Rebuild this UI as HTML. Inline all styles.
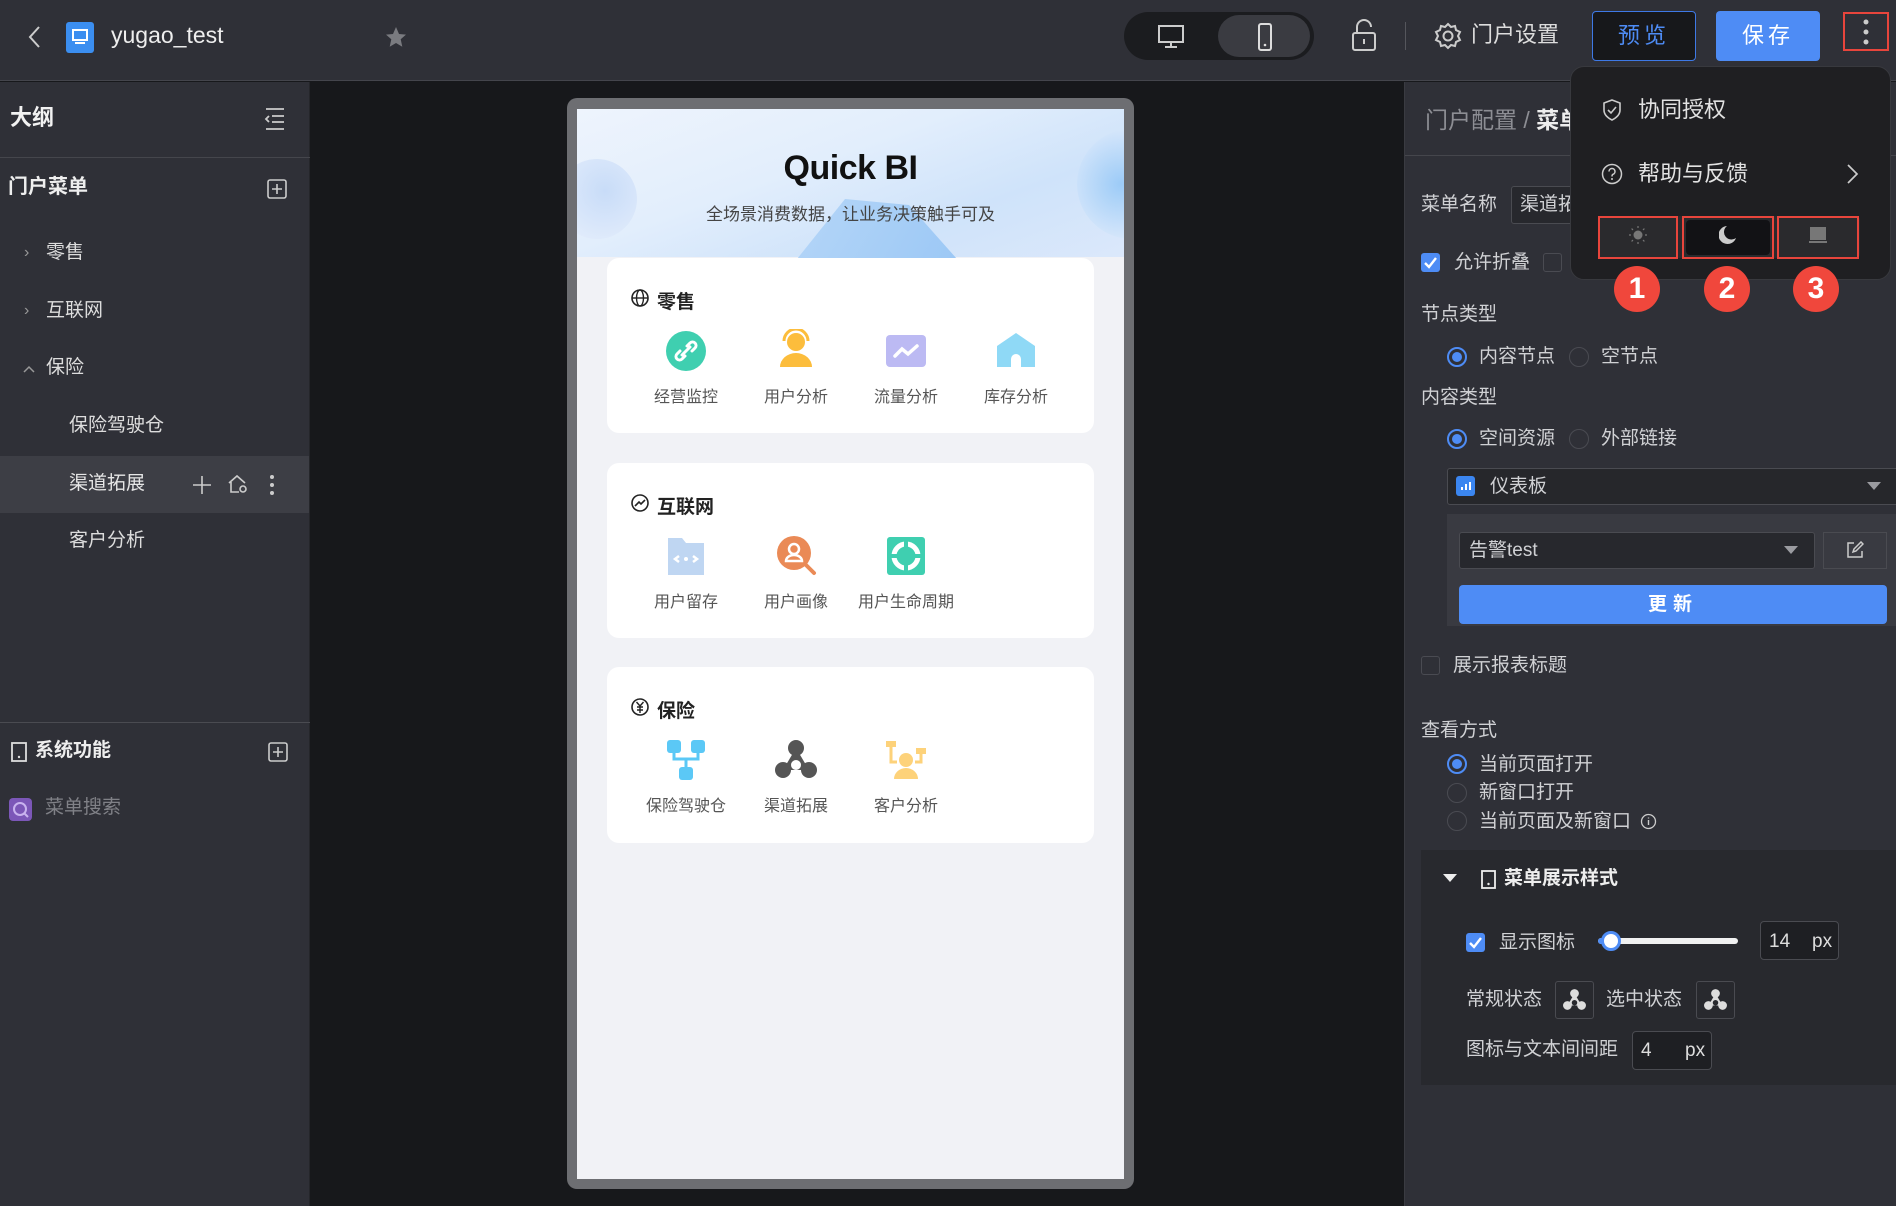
<!DOCTYPE html>
<html><head><meta charset="utf-8">
<style>
*{margin:0;padding:0;box-sizing:border-box}
body{width:1896px;height:1206px;background:#17181b;font-family:"Liberation Sans","Noto Sans CJK SC",sans-serif;color:#d8d9dc;position:relative;overflow:hidden}
.a{position:absolute}
.t{position:absolute;white-space:nowrap;line-height:1}
.rad{position:absolute;width:20px;height:20px;border-radius:50%;border:1.5px solid #4a4b52}
.rad.on{border:2px solid #4e8cf5}
.rad.on:after{content:"";position:absolute;left:3px;top:3px;width:10px;height:10px;border-radius:50%;background:#4e8cf5}
.cb{position:absolute;width:19px;height:19px;border-radius:3px;border:1.5px solid #4a4b52}
.cb.on{background:#4e8cf5;border:none}
.lbl{font-size:19px;color:#d0d1d4}
.card{position:absolute;left:30px;width:487px;background:#fff;border-radius:12px}
.ct{position:absolute;left:50px;font-size:19px;font-weight:bold;color:#222}
.ci{position:absolute;width:44px;height:44px}
.cl{position:absolute;width:120px;text-align:center;font-size:16px;color:#555}
</style></head><body>
<!-- top bar -->
<div class="a" style="left:0;top:0;width:1896px;height:81px;background:#2f3037;border-bottom:1px solid #44454c"></div>
<svg class="a" style="left:26px;top:24px" width="18" height="26" viewBox="0 0 18 26"><path d="M13 3 L4 13 L13 23" fill="none" stroke="#ccc" stroke-width="2"/></svg>
<div class="a" style="left:66px;top:22px;width:28px;height:31px;background:#3b8ef0;border-radius:3px"></div>
<svg class="a" style="left:69px;top:27px" width="22" height="20" viewBox="0 0 22 20"><rect x="4" y="3" width="14" height="10" fill="none" stroke="#fff" stroke-width="2"/><rect x="6" y="15" width="10" height="2" fill="#fff"/></svg>
<div class="t" style="left:111px;top:24px;font-size:23px;color:#eee">yugao_test</div>
<svg class="a" style="left:384px;top:25px" width="24" height="24" viewBox="0 0 24 24"><path d="M12 2l3 7 7 .6-5.3 4.7 1.6 7.4L12 18l-6.3 3.7 1.6-7.4L2 9.6 9 9z" fill="#7a7b80"/></svg>
<div class="a" style="left:1124px;top:12px;width:190px;height:48px;border-radius:24px;background:#1b1c1f"></div>
<div class="a" style="left:1218px;top:15px;width:92px;height:42px;border-radius:21px;background:#3a3b41"></div>
<svg class="a" style="left:1157px;top:24px" width="28" height="26" viewBox="0 0 28 26"><rect x="2" y="2" width="24" height="16" fill="none" stroke="#ccc" stroke-width="2"/><path d="M14 18v5M8 23h12" stroke="#ccc" stroke-width="2"/></svg>
<svg class="a" style="left:1257px;top:22px" width="16" height="30" viewBox="0 0 16 30"><rect x="2" y="2" width="12" height="26" rx="2" fill="none" stroke="#ddd" stroke-width="2"/><circle cx="8" cy="23" r="1.3" fill="#ddd"/></svg>
<svg class="a" style="left:1350px;top:19px" width="28" height="34" viewBox="0 0 28 34"><path d="M7 14V8a7 7 0 0 1 14 0" fill="none" stroke="#ccc" stroke-width="2"/><rect x="3" y="14" width="22" height="17" rx="2" fill="none" stroke="#ccc" stroke-width="2"/><path d="M14 20v5" stroke="#ccc" stroke-width="2"/></svg>
<div class="a" style="left:1405px;top:22px;width:1px;height:28px;background:#55565c"></div>
<svg class="a" style="left:1434px;top:22px" width="28" height="28" viewBox="0 0 28 28"><circle cx="14" cy="14" r="4.5" fill="none" stroke="#ccc" stroke-width="2"/><path d="M14 2l3 3 4-1 1 4 4 2-2 4 2 4-4 2-1 4-4-1-3 3-3-3-4 1-1-4-4-2 2-4-2-4 4-2 1-4 4 1z" fill="none" stroke="#ccc" stroke-width="2"/></svg>
<div class="t" style="left:1471px;top:24px;font-size:22px;color:#ddd">门户设置</div>
<div class="a" style="left:1592px;top:11px;width:104px;height:50px;border:1.5px solid #3e79e6;border-radius:4px;background:#17181b;color:#4e8cf5;font-size:22px;text-align:center;line-height:47px;letter-spacing:4px">预览</div>
<div class="a" style="left:1716px;top:11px;width:104px;height:50px;border-radius:4px;background:#4e8cf5;color:#fff;font-size:22px;text-align:center;line-height:50px;letter-spacing:4px">保存</div>
<div class="a" style="left:1843px;top:12px;width:46px;height:39px;border:2.5px solid #e8453c"></div>
<svg class="a" style="left:1862px;top:18px" width="8" height="28" viewBox="0 0 8 28"><circle cx="4" cy="4" r="2.5" fill="#ccc"/><circle cx="4" cy="14" r="2.5" fill="#ccc"/><circle cx="4" cy="24" r="2.5" fill="#ccc"/></svg>

<!-- left sidebar -->
<div class="a" style="left:0;top:82px;width:310px;height:1124px;background:#2f3037;border-right:1px solid #25262a"></div>
<div class="t" style="left:10px;top:107px;font-size:22px;font-weight:bold;color:#f2f2f2">大纲</div>
<svg class="a" style="left:264px;top:107px" width="22" height="24" viewBox="0 0 22 24"><path d="M2 2h18M8 9h12M8 15h12M2 22h18M5 9l-3 3 3 3" fill="none" stroke="#ccc" stroke-width="1.8"/></svg>
<div class="a" style="left:0;top:157px;width:310px;height:1px;background:#45464c"></div>
<div class="t" style="left:8px;top:177px;font-size:20px;font-weight:bold;color:#eee">门户菜单</div>
<svg class="a" style="left:267px;top:179px" width="20" height="20" viewBox="0 0 20 20"><rect x="1" y="1" width="18" height="18" rx="2" fill="none" stroke="#ccc" stroke-width="1.6"/><path d="M10 5v10M5 10h10" stroke="#ccc" stroke-width="1.6"/></svg>
<div class="t" style="left:24px;top:245px;font-size:16px;color:#999">›</div>
<div class="t" style="left:46px;top:243px;font-size:19px;color:#ddd">零售</div>
<div class="t" style="left:24px;top:303px;font-size:16px;color:#999">›</div>
<div class="t" style="left:46px;top:301px;font-size:19px;color:#ddd">互联网</div>
<svg class="a" style="left:22px;top:364px" width="14" height="10" viewBox="0 0 14 10"><path d="M2 8l5-5 5 5" fill="none" stroke="#999" stroke-width="1.5"/></svg>
<div class="t" style="left:46px;top:358px;font-size:19px;color:#ddd">保险</div>
<div class="t" style="left:69px;top:416px;font-size:19px;color:#ddd">保险驾驶仓</div>
<div class="a" style="left:0;top:456px;width:309px;height:57px;background:#3d3e45"></div>
<div class="t" style="left:69px;top:474px;font-size:19px;color:#e6e6e6">渠道拓展</div>
<svg class="a" style="left:192px;top:475px" width="20" height="20" viewBox="0 0 20 20"><path d="M10 1v18M1 10h18" stroke="#ccc" stroke-width="1.6"/></svg>
<svg class="a" style="left:227px;top:474px" width="22" height="20" viewBox="0 0 22 20"><path d="M2 9L10 2l8 7M4 8v10h8" fill="none" stroke="#ccc" stroke-width="1.6"/><circle cx="16" cy="15" r="3" fill="none" stroke="#ccc" stroke-width="1.6"/></svg>
<svg class="a" style="left:268px;top:474px" width="8" height="22" viewBox="0 0 8 22"><circle cx="4" cy="3" r="2" fill="#ccc"/><circle cx="4" cy="11" r="2" fill="#ccc"/><circle cx="4" cy="19" r="2" fill="#ccc"/></svg>
<div class="t" style="left:69px;top:531px;font-size:19px;color:#ddd">客户分析</div>
<div class="a" style="left:0;top:722px;width:310px;height:1px;background:#4a4b51"></div>
<svg class="a" style="left:11px;top:742px" width="16" height="20" viewBox="0 0 16 20"><rect x="1" y="1" width="14" height="18" fill="none" stroke="#ddd" stroke-width="1.8"/><circle cx="8" cy="15" r="1.2" fill="#ddd"/></svg>
<div class="t" style="left:35px;top:741px;font-size:19px;font-weight:bold;color:#eee">系统功能</div>
<svg class="a" style="left:268px;top:742px" width="20" height="20" viewBox="0 0 20 20"><rect x="1" y="1" width="18" height="18" rx="2" fill="none" stroke="#ccc" stroke-width="1.6"/><path d="M10 5v10M5 10h10" stroke="#ccc" stroke-width="1.6"/></svg>
<div class="a" style="left:9px;top:798px;width:23px;height:23px;border-radius:4px;background:#7c57b8"></div>
<svg class="a" style="left:11px;top:800px" width="20" height="20" viewBox="0 0 20 20"><circle cx="9" cy="9" r="6" fill="none" stroke="#c9b3ef" stroke-width="2"/><path d="M13 13l4 4" stroke="#c9b3ef" stroke-width="2"/></svg>
<div class="t" style="left:45px;top:798px;font-size:19px;color:#808187">菜单搜索</div>

<!-- phone -->
<div class="a" style="left:567px;top:98px;width:567px;height:1091px;background:#6d6e72;border-radius:10px"></div>
<div class="a" style="left:577px;top:109px;width:547px;height:1070px;background:#f1f2f6;overflow:hidden">
  <div class="a" style="left:0;top:0;width:547px;height:148px;background:linear-gradient(160deg,#eef4fd 0%,#e2eefc 40%,#cfe3fa 70%,#dbe8fb 100%)"></div>
  <div class="a" style="left:-20px;top:50px;width:80px;height:80px;border-radius:50%;background:radial-gradient(circle at 60% 40%,#c8dcf8,#e8f0fc)"></div>
  <div class="a" style="left:500px;top:20px;width:110px;height:110px;border-radius:50%;background:radial-gradient(circle at 40% 50%,#9ccbf7,#dbe9fb 70%,transparent)"></div>
  <div class="a" style="left:220px;top:90px;width:160px;height:60px;background:linear-gradient(120deg,#b5d6f8,#9cc8f5);clip-path:polygon(30% 0,70% 10%,100% 100%,0 100%)"></div>
  <div class="t" style="left:0;width:547px;text-align:center;top:42px;font-size:34px;font-weight:bold;color:#111;letter-spacing:-0.5px">Quick BI</div>
  <div class="t" style="left:0;width:547px;text-align:center;top:97px;font-size:17px;color:#444">全场景消费数据，让业务决策触手可及</div>

  <div class="card" style="top:149px;height:175px">
    <svg class="a" style="left:23px;top:30px" width="20" height="20" viewBox="0 0 20 20"><circle cx="10" cy="10" r="8" fill="none" stroke="#222" stroke-width="1.6"/><ellipse cx="10" cy="10" rx="3.5" ry="8" fill="none" stroke="#222" stroke-width="1.4"/><path d="M2 10h16" stroke="#222" stroke-width="1.4"/></svg>
    <div class="ct" style="top:29px">零售</div>
    <svg class="ci" style="left:57px;top:71px" viewBox="0 0 44 44"><circle cx="22" cy="22" r="20" fill="#3fcfb0"/><path d="M18 26l8-8M16 22l-3 3a3.5 3.5 0 0 0 5 5l3-3M28 22l3-3a3.5 3.5 0 0 0-5-5l-3 3" fill="none" stroke="#fff" stroke-width="3" stroke-linecap="round"/></svg>
    <svg class="ci" style="left:167px;top:71px" viewBox="0 0 44 44"><circle cx="22" cy="13" r="9" fill="#fcbd3c"/><path d="M6 38a16 14 0 0 1 32 0z" fill="#fcbd3c"/><path d="M10 12a12 12 0 0 1 24 0" fill="none" stroke="#fcbd3c" stroke-width="3"/></svg>
    <svg class="ci" style="left:277px;top:71px" viewBox="0 0 44 44"><rect x="2" y="6" width="40" height="32" rx="4" fill="#bcbaf3"/><path d="M11 27l7-7 6 5 9-8" fill="none" stroke="#fff" stroke-width="3.5" stroke-linecap="round"/></svg>
    <svg class="ci" style="left:387px;top:71px" viewBox="0 0 44 44"><path d="M3 17L22 4l19 13v21H27v-8a5 5 0 0 0-10 0v8H3z" fill="#8fd9f6"/></svg>
    <div class="cl" style="left:19px;top:125px">经营监控</div>
    <div class="cl" style="left:129px;top:125px">用户分析</div>
    <div class="cl" style="left:239px;top:125px">流量分析</div>
    <div class="cl" style="left:349px;top:125px">库存分析</div>
  </div>

  <div class="card" style="top:354px;height:175px">
    <svg class="a" style="left:23px;top:30px" width="20" height="20" viewBox="0 0 20 20"><circle cx="10" cy="10" r="8" fill="none" stroke="#222" stroke-width="1.6"/><path d="M5 13l4-4 2 2 4-4" fill="none" stroke="#222" stroke-width="1.6"/></svg>
    <div class="ct" style="top:29px">互联网</div>
    <svg class="ci" style="left:57px;top:71px" viewBox="0 0 44 44"><path d="M4 4h14l4 5h18v32H4z" fill="#bfd6f2"/><path d="M15 22l-4 3 4 3M29 22l4 3-4 3" fill="none" stroke="#fff" stroke-width="2.5"/><circle cx="22" cy="25" r="2" fill="#fff"/></svg>
    <svg class="ci" style="left:167px;top:71px" viewBox="0 0 44 44"><circle cx="20" cy="19" r="17" fill="#ea8a56"/><circle cx="20" cy="15" r="5" fill="none" stroke="#fff" stroke-width="2.5"/><path d="M12 27a8 6 0 0 1 16 0z" fill="none" stroke="#fff" stroke-width="2.5"/><path d="M32 31l8 8" stroke="#ea8a56" stroke-width="4" stroke-linecap="round"/></svg>
    <svg class="ci" style="left:277px;top:71px" viewBox="0 0 44 44"><rect x="3" y="3" width="38" height="38" rx="3" fill="#3fcfb0"/><circle cx="22" cy="22" r="12" fill="none" stroke="#fff" stroke-width="5"/><path d="M22 6v8M22 30v8M6 22h8M30 22h8" stroke="#3fcfb0" stroke-width="4"/></svg>
    <div class="cl" style="left:19px;top:125px">用户留存</div>
    <div class="cl" style="left:129px;top:125px">用户画像</div>
    <div class="cl" style="left:229px;top:125px;width:140px">用户生命周期</div>
  </div>

  <div class="card" style="top:558px;height:176px">
    <svg class="a" style="left:23px;top:30px" width="20" height="20" viewBox="0 0 20 20"><circle cx="10" cy="10" r="8" fill="none" stroke="#222" stroke-width="1.6"/><path d="M6.5 5l3.5 4 3.5-4M10 9v7M7 10h6M7 13h6" fill="none" stroke="#222" stroke-width="1.4"/></svg>
    <div class="ct" style="top:29px">保险</div>
    <svg class="ci" style="left:57px;top:71px" viewBox="0 0 44 44"><rect x="3" y="2" width="14" height="13" rx="3" fill="#5bc8f6"/><rect x="27" y="2" width="14" height="13" rx="3" fill="#5bc8f6"/><rect x="15" y="29" width="14" height="13" rx="3" fill="#5bc8f6"/><path d="M10 15v6h24v-6M22 21v8" fill="none" stroke="#5bc8f6" stroke-width="3"/></svg>
    <svg class="ci" style="left:167px;top:71px" viewBox="0 0 44 44"><circle cx="22" cy="10" r="8" fill="#555"/><circle cx="9" cy="32" r="8" fill="#555"/><circle cx="35" cy="32" r="8" fill="#555"/><path d="M22 10L9 32h26z" fill="#555"/><circle cx="22" cy="27" r="5" fill="#fff"/></svg>
    <svg class="ci" style="left:277px;top:71px" viewBox="0 0 44 44"><rect x="2" y="3" width="10" height="6" fill="#fdd27a"/><rect x="32" y="10" width="10" height="6" fill="#fdd27a"/><path d="M7 9v15h6M37 16v8h-6" fill="none" stroke="#fdd27a" stroke-width="3"/><circle cx="22" cy="22" r="7" fill="#fdd27a"/><path d="M10 41a12 11 0 0 1 24 0z" fill="#fdd27a"/></svg>
    <div class="cl" style="left:9px;top:125px;width:140px">保险驾驶仓</div>
    <div class="cl" style="left:129px;top:125px">渠道拓展</div>
    <div class="cl" style="left:239px;top:125px">客户分析</div>
  </div>
</div>

<!-- right panel -->
<div class="a" style="left:1404px;top:82px;width:492px;height:1124px;background:#2f3037;border-left:1px solid #3a3b41"></div>
<div class="t" style="left:1425px;top:109px;font-size:23px;color:#8d8e94">门户配置 / <span style="color:#eee;font-weight:bold">菜单</span></div>
<div class="a" style="left:1405px;top:155px;width:491px;height:1px;background:#45464c"></div>
<div class="t lbl" style="left:1421px;top:195px">菜单名称</div>
<div class="a" style="left:1511px;top:186px;width:100px;height:38px;border:1px solid #4a4b51;border-radius:3px;background:#27282d"></div>
<div class="t lbl" style="left:1520px;top:195px">渠道拓</div>
<div class="cb on" style="left:1421px;top:253px"></div>
<svg class="a" style="left:1423px;top:256px" width="15" height="13" viewBox="0 0 15 13"><path d="M2 7l4 4 7-9" fill="none" stroke="#fff" stroke-width="2.4"/></svg>
<div class="t lbl" style="left:1454px;top:253px">允许折叠</div>
<div class="cb" style="left:1543px;top:253px"></div>
<div class="t lbl" style="left:1421px;top:305px">节点类型</div>
<div class="rad on" style="left:1447px;top:347px"></div>
<div class="t lbl" style="left:1479px;top:347px">内容节点</div>
<div class="rad" style="left:1569px;top:347px"></div>
<div class="t lbl" style="left:1601px;top:347px">空节点</div>
<div class="t lbl" style="left:1421px;top:388px">内容类型</div>
<div class="rad on" style="left:1447px;top:429px"></div>
<div class="t lbl" style="left:1479px;top:429px">空间资源</div>
<div class="rad" style="left:1569px;top:429px"></div>
<div class="t lbl" style="left:1601px;top:429px">外部链接</div>
<div class="a" style="left:1447px;top:468px;width:460px;height:37px;border:1px solid #4a4b51;border-radius:3px;background:#26272b"></div>
<div class="a" style="left:1456px;top:476px;width:19px;height:20px;border-radius:3px;background:#3b86f0"></div>
<svg class="a" style="left:1459px;top:479px" width="14" height="14" viewBox="0 0 14 14"><path d="M3 11V8M7 11V5M11 11V3" stroke="#fff" stroke-width="2"/></svg>
<div class="t lbl" style="left:1490px;top:477px">仪表板</div>
<svg class="a" style="left:1867px;top:482px" width="14" height="9" viewBox="0 0 14 9"><path d="M0 0h14L7 8z" fill="#9a9ba0"/></svg>
<div class="a" style="left:1447px;top:514px;width:449px;height:112px;background:#393a41"></div>
<div class="a" style="left:1459px;top:532px;width:356px;height:37px;border:1px solid #4a4b51;border-radius:3px;background:#27282d"></div>
<div class="t lbl" style="left:1469px;top:541px">告警test</div>
<svg class="a" style="left:1784px;top:546px" width="14" height="9" viewBox="0 0 14 9"><path d="M0 0h14L7 8z" fill="#9a9ba0"/></svg>
<div class="a" style="left:1823px;top:532px;width:64px;height:37px;border:1px solid #4a4b51;background:#393a41"></div>
<svg class="a" style="left:1846px;top:541px" width="18" height="18" viewBox="0 0 18 18"><path d="M8 2H2v14h14v-6" fill="none" stroke="#ccc" stroke-width="1.5"/><path d="M7 11l1-3 7-7 2 2-7 7z" fill="none" stroke="#ccc" stroke-width="1.5"/></svg>
<div class="a" style="left:1459px;top:585px;width:428px;height:39px;border-radius:4px;background:#4e8cf5;color:#fff;font-size:19px;text-align:center;line-height:39px;letter-spacing:6px;font-weight:bold">更新</div>
<div class="cb" style="left:1421px;top:656px"></div>
<div class="t lbl" style="left:1453px;top:656px">展示报表标题</div>
<div class="t lbl" style="left:1421px;top:721px">查看方式</div>
<div class="rad on" style="left:1447px;top:754px"></div>
<div class="t lbl" style="left:1479px;top:755px">当前页面打开</div>
<div class="rad" style="left:1447px;top:783px"></div>
<div class="t lbl" style="left:1479px;top:783px">新窗口打开</div>
<div class="rad" style="left:1447px;top:811px"></div>
<div class="t lbl" style="left:1479px;top:812px">当前页面及新窗口</div>
<svg class="a" style="left:1640px;top:813px" width="17" height="17" viewBox="0 0 17 17"><circle cx="8.5" cy="8.5" r="7" fill="none" stroke="#ccc" stroke-width="1.3"/><path d="M8.5 7v5M8.5 4.5v1" stroke="#ccc" stroke-width="1.4"/></svg>
<div class="a" style="left:1421px;top:850px;width:475px;height:235px;background:#28292e"></div>
<svg class="a" style="left:1443px;top:874px" width="14" height="9" viewBox="0 0 14 9"><path d="M0 0h14L7 8z" fill="#eee"/></svg>
<svg class="a" style="left:1481px;top:870px" width="15" height="19" viewBox="0 0 15 19"><rect x="1" y="1" width="13" height="17" fill="none" stroke="#eee" stroke-width="1.8"/><circle cx="7.5" cy="14" r="1.2" fill="#eee"/></svg>
<div class="t" style="left:1504px;top:869px;font-size:19px;font-weight:bold;color:#eee">菜单展示样式</div>
<div class="cb on" style="left:1466px;top:933px"></div>
<svg class="a" style="left:1468px;top:936px" width="15" height="13" viewBox="0 0 15 13"><path d="M2 7l4 4 7-9" fill="none" stroke="#fff" stroke-width="2.4"/></svg>
<div class="t lbl" style="left:1499px;top:933px">显示图标</div>
<div class="a" style="left:1598px;top:938px;width:140px;height:6px;border-radius:3px;background:#f1f1f1"></div>
<div class="a" style="left:1598px;top:938px;width:18px;height:6px;border-radius:3px;background:#4e8cf5"></div>
<div class="a" style="left:1601px;top:931px;width:20px;height:20px;border-radius:50%;background:#fff;border:3px solid #4e8cf5"></div>
<div class="a" style="left:1760px;top:921px;width:79px;height:39px;border:1px solid #4a4b51;border-radius:4px;background:#1e1f23"></div>
<div class="t lbl" style="left:1769px;top:932px;color:#ddd">14</div>
<div class="t lbl" style="left:1812px;top:932px;color:#ddd">px</div>
<div class="t lbl" style="left:1466px;top:990px">常规状态</div>
<div class="a" style="left:1555px;top:981px;width:39px;height:38px;border:1px solid #4a4b51;border-radius:3px"></div>
<svg class="a" style="left:1562px;top:988px" width="25" height="24" viewBox="0 0 44 44"><circle cx="22" cy="10" r="8" fill="#ddd"/><circle cx="9" cy="32" r="8" fill="#ddd"/><circle cx="35" cy="32" r="8" fill="#ddd"/><path d="M22 10L9 32h26z" fill="#ddd"/><circle cx="22" cy="27" r="5" fill="#28292e"/></svg>
<div class="t lbl" style="left:1606px;top:990px">选中状态</div>
<div class="a" style="left:1696px;top:981px;width:39px;height:38px;border:1px solid #4a4b51;border-radius:3px"></div>
<svg class="a" style="left:1703px;top:988px" width="25" height="24" viewBox="0 0 44 44"><circle cx="22" cy="10" r="8" fill="#ddd"/><circle cx="9" cy="32" r="8" fill="#ddd"/><circle cx="35" cy="32" r="8" fill="#ddd"/><path d="M22 10L9 32h26z" fill="#ddd"/><circle cx="22" cy="27" r="5" fill="#28292e"/></svg>
<div class="t lbl" style="left:1466px;top:1040px">图标与文本间间距</div>
<div class="a" style="left:1632px;top:1031px;width:80px;height:39px;border:1px solid #4a4b51;border-radius:4px;background:#1e1f23"></div>
<div class="t lbl" style="left:1641px;top:1041px;color:#ddd">4</div>
<div class="t lbl" style="left:1685px;top:1041px;color:#ddd">px</div>

<!-- popup -->
<div class="a" style="left:1570px;top:66px;width:321px;height:214px;background:#1f1f22;border:1px solid #38393e;border-radius:14px"></div>
<svg class="a" style="left:1602px;top:98px" width="20" height="24" viewBox="0 0 20 24"><path d="M10 2l8 3v7c0 5-4 8-8 10-4-2-8-5-8-10V5z" fill="none" stroke="#ccc" stroke-width="1.6"/><path d="M6 12l3 3 5-6" fill="none" stroke="#ccc" stroke-width="1.6"/></svg>
<div class="t" style="left:1638px;top:99px;font-size:22px;color:#e2e2e2">协同授权</div>
<svg class="a" style="left:1601px;top:163px" width="22" height="22" viewBox="0 0 22 22"><circle cx="11" cy="11" r="9.5" fill="none" stroke="#ccc" stroke-width="1.5"/><path d="M8 8.5a3 3 0 1 1 4 2.8c-1 .4-1 1-1 2.2" fill="none" stroke="#ccc" stroke-width="1.5"/><circle cx="11" cy="16" r="1" fill="#ccc"/></svg>
<div class="t" style="left:1638px;top:163px;font-size:22px;color:#e2e2e2">帮助与反馈</div>
<svg class="a" style="left:1845px;top:163px" width="14" height="22" viewBox="0 0 14 22"><path d="M3 2l9 9-9 9" fill="none" stroke="#ccc" stroke-width="1.7"/></svg>
<div class="a" style="left:1598px;top:216px;width:262px;height:42px;background:#2a2a2d;border-radius:4px"></div>
<div class="a" style="left:1686px;top:220px;width:84px;height:35px;background:#121215;border-radius:4px"></div>
<div class="a" style="left:1598px;top:216px;width:80px;height:43px;border:2.5px solid #e8453c"></div>
<div class="a" style="left:1682px;top:216px;width:92px;height:43px;border:2.5px solid #e8453c"></div>
<div class="a" style="left:1777px;top:216px;width:82px;height:43px;border:2.5px solid #e8453c"></div>
<svg class="a" style="left:1629px;top:226px" width="18" height="18" viewBox="0 0 18 18"><circle cx="9" cy="9" r="4.5" fill="#777"/><g stroke="#777" stroke-width="1.2"><path d="M9 0v2M9 16v2M0 9h2M16 9h2M2.6 2.6l1.4 1.4M14 14l1.4 1.4M2.6 15.4L4 14M14 4l1.4-1.4"/></g></svg>
<svg class="a" style="left:1719px;top:225px" width="18" height="20" viewBox="0 0 18 20"><path d="M8 1a9 9 0 1 0 9 12A7 7 0 0 1 8 1z" fill="#ccc"/></svg>
<svg class="a" style="left:1807px;top:226px" width="22" height="18" viewBox="0 0 22 18"><rect x="3" y="1" width="16" height="13" fill="#777"/><rect x="2" y="15" width="18" height="2" fill="#777"/></svg>
<div class="a" style="left:1614px;top:266px;width:46px;height:46px;border-radius:50%;background:#f0473c;color:#fff;font-size:30px;text-align:center;line-height:46px;font-weight:bold">1</div>
<div class="a" style="left:1704px;top:266px;width:46px;height:46px;border-radius:50%;background:#f0473c;color:#fff;font-size:30px;text-align:center;line-height:46px;font-weight:bold">2</div>
<div class="a" style="left:1793px;top:266px;width:46px;height:46px;border-radius:50%;background:#f0473c;color:#fff;font-size:30px;text-align:center;line-height:46px;font-weight:bold">3</div>
</body></html>
